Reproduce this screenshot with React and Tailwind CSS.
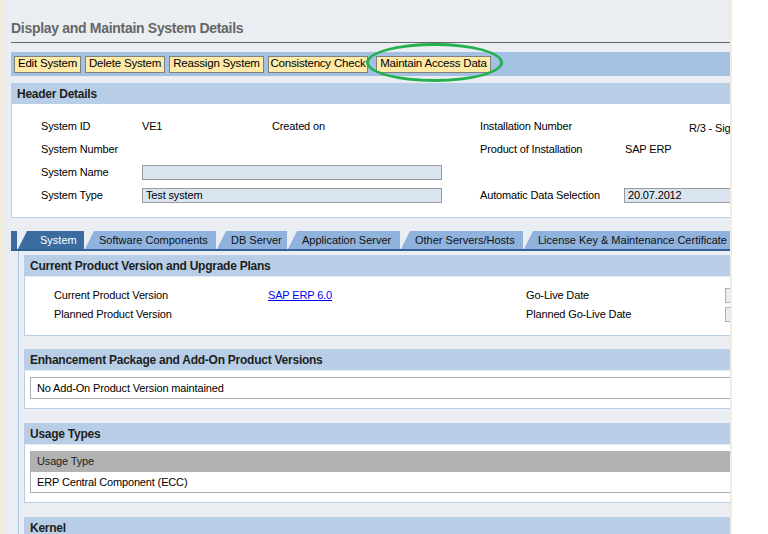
import React from 'react'

const font = { fontFamily: '"Liberation Sans", Arial, sans-serif' }

function SectionBar({ title }) {
  return (
    <div className="h-[21px] bg-[#b8cee6] flex items-center pl-[6px] text-[12px] font-bold tracking-[-0.25px] text-[#1e1e1e]">
      {title}
    </div>
  )
}

function Tab({ label, active, width }) {
  return (
    <div
      style={{ width }}
      className={
        'h-[18px] flex items-center whitespace-nowrap overflow-hidden text-[11px] [clip-path:polygon(9px_0,100%_0,100%_100%,0_100%)] ' +
        (active ? 'bg-[#3a6c9f] text-white pl-[22px]' : 'bg-[#8fb3dc] text-[#111] pl-[14px]')
      }
    >
      {label}
    </div>
  )
}

export default function App() {
  const buttons = [
    ['Edit System', 67],
    ['Delete System', 80],
    ['Reassign System', 95],
    ['Consistency Check', 100],
    ['Maintain Access Data', 115],
  ]
  const tabs = [
    ['System', 66],
    ['Software Components', 131],
    ['DB Server', 70],
    ['Application Server', 112],
    ['Other Servers/Hosts', 122],
    ['License Key & Maintenance Certificate', 206],
  ]

  return (
    <div className="flex w-[768px] h-[534px] overflow-hidden bg-white" style={font}>
      <div className="w-[4px] bg-[#f1ecdc]" />
      <div className="w-[726px] h-[534px] overflow-hidden bg-[#eaeef2] pl-[7px]">
        <div className="w-[800px] text-[11px] tracking-[-0.15px]">
          {/* title */}
          <div className="pt-[18px] h-[43px] text-[14px] font-bold tracking-[-0.3px] text-[#666666] w-[719px] border-b border-[#666666]">
            Display and Maintain System Details
          </div>

          {/* toolbar */}
          <div className="relative mt-[9px] h-[24px] bg-[#a4c1e3] flex items-center gap-[4px] pl-[3px] w-[719px]">
            {buttons.map(([b, w]) => (
              <div
                key={b}
                style={{ width: w }}
                className={
                  'h-[17px] flex items-center justify-center bg-[#ffeaa8] border border-[#808080] text-[11.5px] tracking-[-0.2px] text-black whitespace-nowrap overflow-hidden ' +
                  (b === 'Maintain Access Data' ? 'ml-[4px]' : '')
                }
              >
                {b}
              </div>
            ))}
            <div className="absolute left-[355px] top-[-9px] w-[137px] h-[39px] rounded-[50%] border-[3px] border-[#22b14c]" />
          </div>

          {/* header details */}
          <div className="mt-[7px]">
            <SectionBar title="Header Details" />
            <div className="bg-white border border-[#b8cee6] border-t-white pt-[10px] pb-[10px] pl-[29px] text-black">
              <div className="grid grid-cols-[101px_130px_208px_145px_1fr] auto-rows-[23px] items-center">
                <div>System ID</div>
                <div>VE1</div>
                <div>Created on</div>
                <div>Installation Number</div>
                <div className="pl-[64px] pt-[3px] whitespace-nowrap">R/3 - Signature</div>

                <div>System Number</div>
                <div />
                <div />
                <div>Product of Installation</div>
                <div>SAP ERP</div>

                <div>System Name</div>
                <div className="col-span-2">
                  <div className="w-[300px] h-[15px] bg-[#dbe5f1] border border-[#9a9a9a]" />
                </div>
                <div />
                <div />

                <div>System Type</div>
                <div className="col-span-2">
                  <div className="w-[300px] h-[15px] bg-[#dbe5f1] border border-[#9a9a9a] flex items-center pl-[3px]">
                    Test system
                  </div>
                </div>
                <div>Automatic Data Selection</div>
                <div>
                  <div className="w-[140px] h-[15px] bg-[#dbe5f1] border border-[#9a9a9a] flex items-center pl-[3px] -ml-[1px]">
                    20.07.2012
                  </div>
                </div>
              </div>
            </div>
          </div>

          {/* tabs */}
          <div className="mt-[13px] tracking-normal">
            <div className="flex items-end gap-[1px]">
              <div className="w-[6px] h-[18px] bg-[#3a6c9f]" />
              {tabs.map(([t, w], i) => (
                <Tab key={t} label={t} width={w} active={i === 0} />
              ))}
            </div>
            <div className="h-[2px] bg-[#2f6298] w-[719px]" />
          </div>

          {/* tab content */}
          <div className="ml-[7px] border-l border-[#a9c4e4] pl-[5px] pt-[4px] pb-[20px]">
            <SectionBar title="Current Product Version and Upgrade Plans" />
            <div className="bg-white border border-[#b8cee6] border-t-[#e4ecf6] pt-[9px] pb-[11px] pl-[29px] text-black">
              <div className="grid grid-cols-[214px_258px_199px_1fr] auto-rows-[19px] items-center">
                <div>Current Product Version</div>
                <div className="text-[#0000ee] underline">SAP ERP 6.0</div>
                <div>Go-Live Date</div>
                <div><div className="w-[60px] h-[15px] bg-[#eaeef2] border border-[#b0b0b0]" /></div>
                <div>Planned Product Version</div>
                <div />
                <div>Planned Go-Live Date</div>
                <div><div className="w-[60px] h-[15px] bg-[#eaeef2] border border-[#b0b0b0]" /></div>
              </div>
            </div>

            <div className="mt-[13px]">
              <SectionBar title="Enhancement Package and Add-On Product Versions" />
              <div className="bg-white border border-[#b8cee6] border-t-[#e4ecf6] pt-[6px] pb-[9px] pl-[5px] text-black">
                <div className="h-[22px] border border-[#aaaaaa] flex items-center pl-[6px]">
                  No Add-On Product Version maintained
                </div>
              </div>
            </div>

            <div className="mt-[14px]">
              <SectionBar title="Usage Types" />
              <div className="bg-white border border-[#b8cee6] border-t-[#e4ecf6] pt-[6px] pb-[9px] pl-[5px] text-black">
                <div className="border border-[#aaaaaa] border-t-0">
                  <div className="h-[21px] bg-[#b2b2b2] flex items-center pl-[6px] text-[#1e1e1e]">Usage Type</div>
                  <div className="h-[20px] flex items-center pl-[6px]">ERP Central Component (ECC)</div>
                </div>
              </div>
            </div>

            <div className="mt-[14px]">
              <SectionBar title="Kernel" />
            </div>
          </div>
        </div>
      </div>
      <div className="w-[2px] bg-[#f1ecdc]" />
      <div className="flex-1 bg-white" />
    </div>
  )
}
